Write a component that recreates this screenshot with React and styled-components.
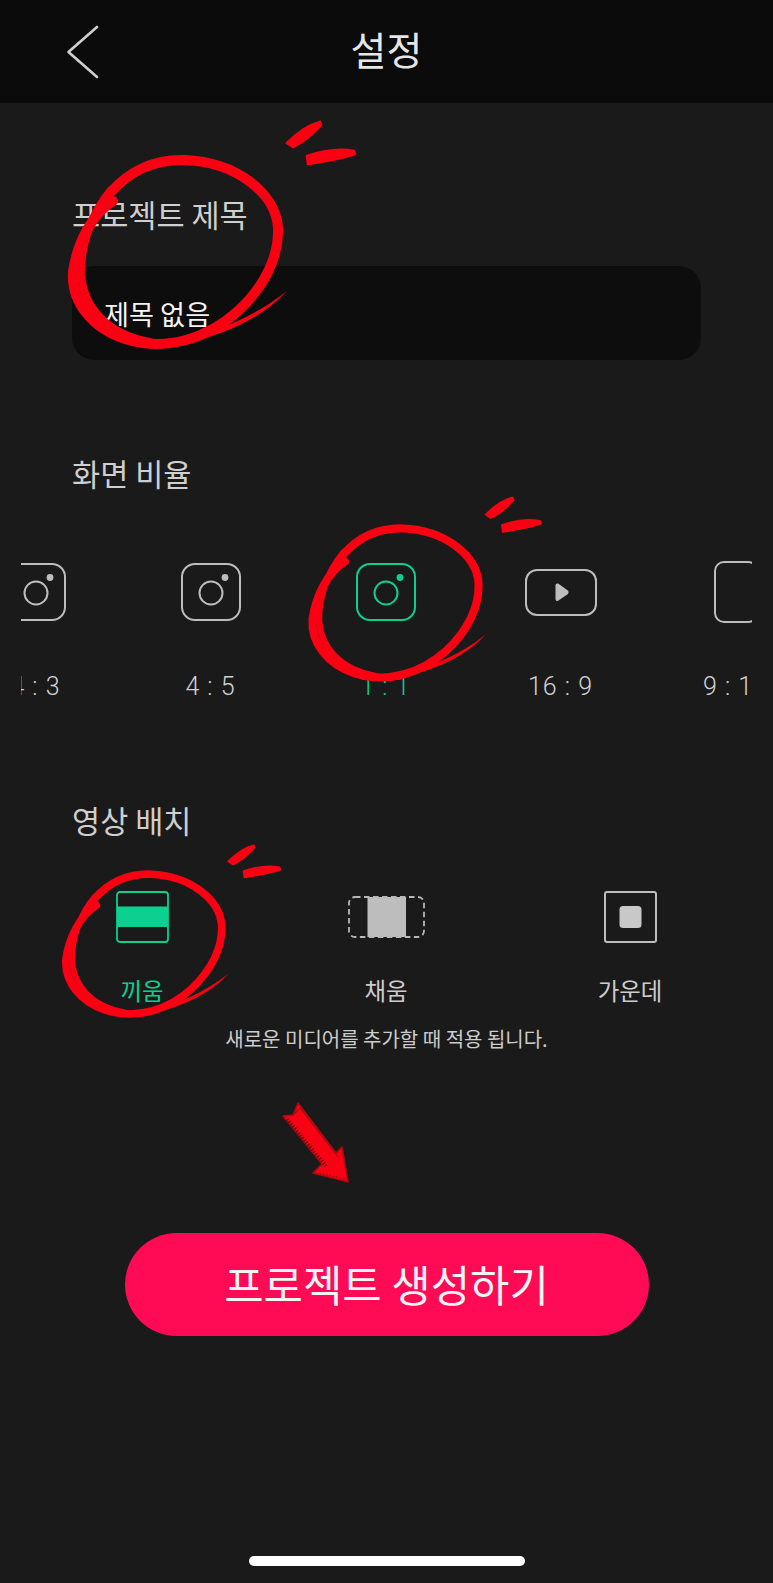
import React from "react";
import styled, { createGlobalStyle } from "styled-components";

const Global = createGlobalStyle`
  html, body { margin: 0; padding: 0; background: #1a1a1a; }
  body { font-family: "Noto Sans CJK KR", "Noto Sans", sans-serif; }
  * { box-sizing: border-box; }
`;

const GREEN = "#0bd08f";
const GRAY = "#bdbdbd";

const Page = styled.div`
  position: relative;
  width: 773px;
  height: 1583px;
  overflow: hidden;
  background: #1a1a1a;
  color: #ddd;
`;
const Header = styled.header`
  display: flex;
  align-items: center;
  justify-content: center;
  position: relative;
  height: 103px;
  background: #0b0b0b;
`;
const BackIcon = styled.svg`
  position: absolute;
  left: 64px;
  top: 23px;
`;
const Title = styled.h1`
  margin: 0;
  font-size: 39px;
  font-weight: 400;
  line-height: 50px;
  color: #e6e6e6;
  position: relative;
  top: -4px;
`;
const Section = styled.section`
  padding: ${(p) => p.$top}px 72px 0 72px;
`;
const Label = styled.h2`
  margin: 0;
  font-size: 30.6px;
  font-weight: 400;
  line-height: 40px;
  color: #cfcfcf;
`;
const TitleField = styled.div`
  display: flex;
  align-items: center;
  height: 94px;
  margin-top: 32px;
  padding: 0 0 0 32px;
  border-radius: 22px;
  background: #0d0d0d;
  color: #f4f4f4;
  font-size: 27.2px;
`;
const RatioClip = styled.div`
  width: 731px;
  margin: 64px 0 0 21px;
  overflow: hidden;
`;
const RatioRow = styled.div`
  display: flex;
  width: max-content;
  margin-left: -73px;
`;
const RatioItem = styled.div`
  display: flex;
  flex-direction: column;
  align-items: center;
  width: 175px;
  color: ${(p) => (p.$on ? GREEN : GRAY)};
`;
const RatioIcon = styled.div`
  display: flex;
  align-items: center;
  justify-content: center;
  height: 70px;
`;
const RatioText = styled.div`
  margin-top: 45px;
  font-family: Roboto, "Noto Sans", sans-serif;
  font-size: 25px;
  font-weight: 300;
  line-height: 30px;
  letter-spacing: 1px;
  white-space: pre;
  color: ${(p) => (p.$on ? GREEN : "#d2d2d2")};
`;
const FitGrid = styled.div`
  display: grid;
  grid-template-columns: repeat(3, 244px);
  margin: 47px 0 0 20px;
`;
const FitItem = styled.div`
  display: flex;
  flex-direction: column;
  align-items: center;
  color: ${(p) => (p.$on ? GREEN : "#cdcdcd")};
`;
const FitIcon = styled.div`
  display: flex;
  align-items: center;
  justify-content: center;
  height: 60px;
`;
const FitText = styled.div`
  margin-top: 28px;
  font-size: 23.4px;
  line-height: 30px;
`;
const Caption = styled.p`
  margin: 20px 0 0;
  text-align: center;
  font-size: 20px;
  line-height: 28px;
  color: #cccccc;
`;
const CreateButton = styled.button`
  display: block;
  width: 524px;
  height: 103px;
  margin: 180px auto 0;
  padding: 0 0 4px;
  border: 0;
  border-radius: 52px;
  background: #ff0a54;
  color: #f4f4f4;
  font-family: inherit;
  font-size: 42.8px;
  font-weight: 400;
`;
const HomeBar = styled.div`
  width: 276px;
  height: 10px;
  margin: 220px auto 0;
  border-radius: 5px;
  background: #fff;
`;
const Overlay = styled.svg`
  position: absolute;
  left: ${(p) => p.$x}px;
  top: ${(p) => p.$y}px;
  pointer-events: none;
`;

const Insta = ({ color = GRAY }) => (
  <svg width="60" height="58" viewBox="0 0 60 58" fill="none">
    <rect x="1" y="1" width="58" height="56" rx="13" stroke={color} strokeWidth="2" />
    <circle cx="30" cy="30" r="11.5" stroke={color} strokeWidth="2" />
    <circle cx="44" cy="14.5" r="3.4" fill={color} />
  </svg>
);
const Play = () => (
  <svg width="72" height="47" viewBox="0 0 72 47" fill="none">
    <rect x="1" y="1" width="70" height="45" rx="11" stroke={GRAY} strokeWidth="2" />
    <path d="M30.5 16.5c0-1.8 1.6-2.6 3-1.7l9 6.4c1.4 1 1.4 3 0 4l-9 6.4c-1.4.9-3 .1-3-1.7z" fill={GRAY} />
  </svg>
);
const Tall = () => (
  <svg width="44" height="62" viewBox="0 0 44 62" fill="none">
    <rect x="1" y="1" width="42" height="60" rx="9" stroke={GRAY} strokeWidth="2" />
  </svg>
);
const FitGlyph = () => (
  <svg width="53" height="52" viewBox="0 0 53 52" fill="none">
    <rect x="1" y="1" width="51" height="50" rx="3" stroke={GREEN} strokeWidth="1.8" />
    <rect x="1" y="15.5" width="51" height="20.5" fill={GREEN} />
  </svg>
);
const FillGlyph = () => (
  <svg width="77" height="42" viewBox="0 0 77 42" fill="none">
    <rect x="19.5" y="1" width="38.5" height="40" fill="#bdbdbd" />
    <rect x="1" y="1" width="75" height="40" rx="6" stroke="#b8b8b8" strokeWidth="1.8" strokeDasharray="5.5 3.5" />
  </svg>
);
const CenterGlyph = () => (
  <svg width="53" height="52" viewBox="0 0 53 52" fill="none">
    <rect x="1" y="1" width="51" height="50" rx="2" stroke={GRAY} strokeWidth="2" />
    <rect x="15.5" y="15" width="22" height="22" rx="3.5" fill="#c8c8c8" />
  </svg>
);

const Scribble = ({ x, y, scale }) => (
  <Overlay $x={x} $y={y} width={300 * scale} height={240 * scale} viewBox="60 115 300 240" fill="none">
    <path
      d="M113 201C92 214 77 243 73 272C71 302 92 328 125 339C167 352 208 338 238 311C266 285 279 255 278 228C276 193 236 162 185 160C150 159 126 175 111 192"
      stroke="#fb0012"
      strokeWidth="10"
      strokeLinecap="round"
    />
    <path
      d="M111 190C92 212 80 245 81 275C84 307 106 334 150 342"
      stroke="#fb0012"
      strokeWidth="8"
      strokeLinecap="round"
    />
    <path d="M150 347C205 344 255 325 287 291C255 316 220 331 186 337Z" fill="#fb0012" />
    <path d="M287 143C297 133 308 125 320 122L321 125C312 135 302 143 293 147Z" fill="#fb0012" stroke="#fb0012" strokeWidth="2.5" />
    <path d="M307 156C322 151 340 148 354 151L355 154C340 159 322 162 308 164Z" fill="#fb0012" stroke="#fb0012" strokeWidth="2.5" />
  </Overlay>
);

const Arrow = () => (
  <Overlay $x={278} $y={1098} width={76} height={90} viewBox="278 1098 76 90" fill="none">
    <path d="M283 1116L293 1115L298 1103L336 1153L342 1147L348 1182L313 1173L322 1164Z" fill="#fb0012" stroke="#a80a14" strokeWidth="1.6" strokeLinejoin="round" />
    <path d="M287 1119L326 1166" stroke="#6d0a10" strokeWidth="3.5" strokeDasharray="1.5 1.5" />
    <path d="M293 1115L300 1108L338 1157" stroke="#a80a14" strokeWidth="1.2" />
    <path d="M319 1173L345 1179" stroke="#a80a14" strokeWidth="1.4" strokeDasharray="2 1.5" />
  </Overlay>
);

const ratios = [
  { label: "4 : 3", icon: <Insta /> },
  { label: "4 : 5", icon: <Insta /> },
  { label: "1 : 1", icon: <Insta color={GREEN} />, on: true },
  { label: "16 : 9", icon: <Play /> },
  { label: "9 : 16", icon: <Tall /> },
];
const fits = [
  { label: "끼움", icon: <FitGlyph />, on: true },
  { label: "채움", icon: <FillGlyph /> },
  { label: "가운데", icon: <CenterGlyph /> },
];

export default function App() {
  return (
    <Page>
      <Global />
      <Header>
        <BackIcon width="36" height="58" viewBox="0 0 36 58" fill="none">
          <path d="M33 4L4.5 29L33 54" stroke="#cfcfcf" strokeWidth="2.6" strokeLinecap="round" strokeLinejoin="round" />
        </BackIcon>
        <Title>설정</Title>
      </Header>
      <Section $top={91}>
        <Label>프로젝트 제목</Label>
        <TitleField>제목 없음</TitleField>
      </Section>
      <Section $top={93}>
        <Label>화면 비율</Label>
      </Section>
      <RatioClip>
        <RatioRow>
          {ratios.map((r) => (
            <RatioItem key={r.label} $on={r.on}>
              <RatioIcon>{r.icon}</RatioIcon>
              <RatioText $on={r.on}>{r.label}</RatioText>
            </RatioItem>
          ))}
        </RatioRow>
      </RatioClip>
      <Section $top={98}>
        <Label>영상 배치</Label>
      </Section>
      <FitGrid>
        {fits.map((f) => (
          <FitItem key={f.label} $on={f.on}>
            <FitIcon>{f.icon}</FitIcon>
            <FitText>{f.label}</FitText>
          </FitItem>
        ))}
      </FitGrid>
      <Caption>새로운 미디어를 추가할 때 적용 됩니다.</Caption>
      <CreateButton>프로젝트 생성하기</CreateButton>
      <HomeBar />
      <Scribble x={60} y={115} scale={1} />
      <Scribble x={302} y={492} scale={0.81} />
      <Scribble x={56} y={840} scale={0.76} />
      <Arrow />
    </Page>
  );
}
